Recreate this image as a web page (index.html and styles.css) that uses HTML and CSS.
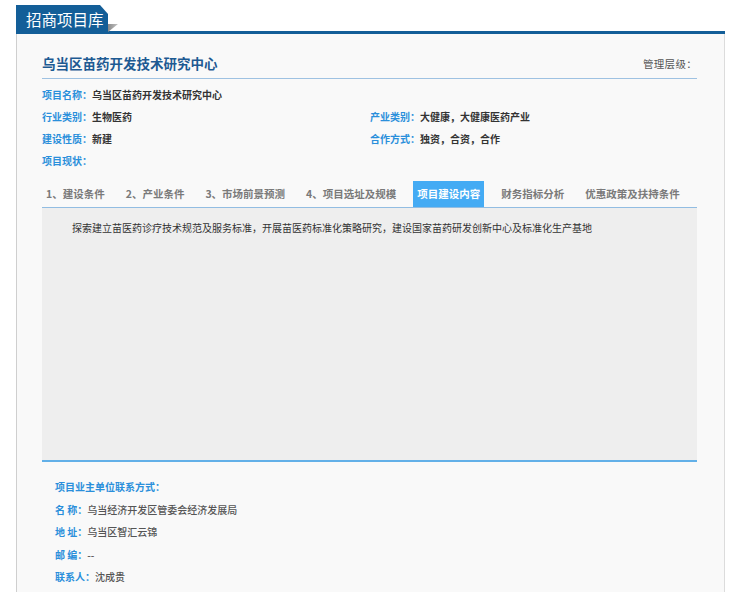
FILE: index.html
```html
<!DOCTYPE html>
<html lang="zh-CN">
<head>
<meta charset="utf-8">
<title>招商项目库</title>
<link rel="stylesheet" href="styles.css">
</head>
<body>
<div class="page">
  <div class="header">
    <div class="header-tab">招商项目库</div>
    <span class="fold"></span>
  </div>
  <div class="panel">
    <div class="title-row">
      <h1 class="title">乌当区苗药开发技术研究中心</h1>
      <span class="level">管理层级：</span>
    </div>
    <div class="info">
      <div class="info-row full"><span class="lbl">项目名称：</span><span class="val">乌当区苗药开发技术研究中心</span></div>
      <div class="info-row"><span class="lbl">行业类别：</span><span class="val">生物医药</span></div>
      <div class="info-row"><span class="lbl">产业类别：</span><span class="val">大健康，大健康医药产业</span></div>
      <div class="info-row"><span class="lbl">建设性质：</span><span class="val">新建</span></div>
      <div class="info-row"><span class="lbl">合作方式：</span><span class="val">独资，合资，合作</span></div>
      <div class="info-row full"><span class="lbl">项目现状：</span><span class="val"></span></div>
    </div>
    <div class="tabs">
      <span class="tab">1、建设条件</span>
      <span class="tab">2、产业条件</span>
      <span class="tab">3、市场前景预测</span>
      <span class="tab">4、项目选址及规模</span>
      <span class="tab active">项目建设内容</span>
      <span class="tab">财务指标分析</span>
      <span class="tab">优惠政策及扶持条件</span>
    </div>
    <div class="content">
      <p>探索建立苗医药诊疗技术规范及服务标准，开展苗医药标准化策略研究，建设国家苗药研发创新中心及标准化生产基地</p>
    </div>
    <div class="contact">
      <div class="c-row"><span class="lbl">项目业主单位联系方式：</span></div>
      <div class="c-row"><span class="lbl">名 称：</span><span class="cval">乌当经济开发区管委会经济发展局</span></div>
      <div class="c-row"><span class="lbl">地 址：</span><span class="cval">乌当区智汇云锦</span></div>
      <div class="c-row"><span class="lbl">邮 编：</span><span class="cval">--</span></div>
      <div class="c-row"><span class="lbl">联系人：</span><span class="cval">沈成贵</span></div>
    </div>
  </div>
</div>
</body>
</html>
```

FILE: styles.css
```css
* { box-sizing: border-box; }
html, body { margin: 0; padding: 0; background: #ffffff; }
body {
  font-family: "Noto Sans CJK SC", "Noto Sans", "DejaVu Sans", sans-serif;
  color: #333;
}
.page {
  padding-top: 5px;
  padding-left: 16px;
  width: 725px;
}
.header {
  position: relative;
  height: 29px;
  border-bottom: 3px solid #135e98;
}
.header-tab {
  width: 92px;
  height: 26px;
  background: #135e98;
  color: #fff;
  font-size: 15.5px;
  line-height: 28px;
  padding-left: 10px;
  white-space: nowrap;
  clip-path: polygon(0 0, 84px 0, 92px 9px, 92px 100%, 0 100%);
}
.fold {
  position: absolute;
  left: 92px;
  top: 19px;
  width: 10px;
  height: 8px;
  background: linear-gradient(90deg, #8a8a8a, #c4c4c4);
  clip-path: polygon(0 0, 100% 0, 0 100%);
}
.panel {
  background: #f9f9f9;
  border-left: 1px solid #cfcfcf;
  border-right: 1px solid #dcdcdc;
  padding: 14px 27px 16px 25px;
  min-height: 560px;
}
.title-row {
  display: flex;
  justify-content: space-between;
  align-items: center;
  height: 31px;
  border-bottom: 1px solid #9fc2e2;
}
.title {
  margin: 0;
  font-size: 13.5px;
  font-weight: bold;
  color: #1d5a92;
  line-height: 29px;
}
.level {
  font-size: 10.5px;
  color: #555;
  letter-spacing: 0.3px;
}
.info {
  display: grid;
  grid-template-columns: 328px 1fr;
  padding-top: 5px;
}
.info-row {
  font-size: 10px;
  line-height: 22px;
  font-weight: bold;
  white-space: nowrap;
}
.info-row.full { grid-column: 1 / 3; }
.lbl { color: #2a8fdb; }
.val { color: #333; }
.tabs {
  display: flex;
  gap: 13px;
  margin-top: 9px;
  height: 27px;
  border-bottom: 1px solid #92bde2;
}
.tab {
  padding: 0 4px;
  font-size: 10.5px;
  line-height: 26px;
  height: 26px;
  color: #7a7a7a;
  font-weight: bold;
  white-space: nowrap;
}
.tab.active {
  background: #44abf4;
  color: #fff;
}
.content {
  background: #eeeeee;
  height: 254px;
  border-bottom: 2px solid #62b0e8;
  padding: 12px 30px;
}
.content p {
  margin: 0;
  font-size: 10px;
  line-height: 16px;
  color: #333;
}
.contact {
  padding: 14px 0 0 13px;
}
.c-row {
  font-size: 10px;
  line-height: 22.5px;
  font-weight: bold;
  white-space: nowrap;
}
.cval {
  color: #555;
  font-weight: 500;
}
```
